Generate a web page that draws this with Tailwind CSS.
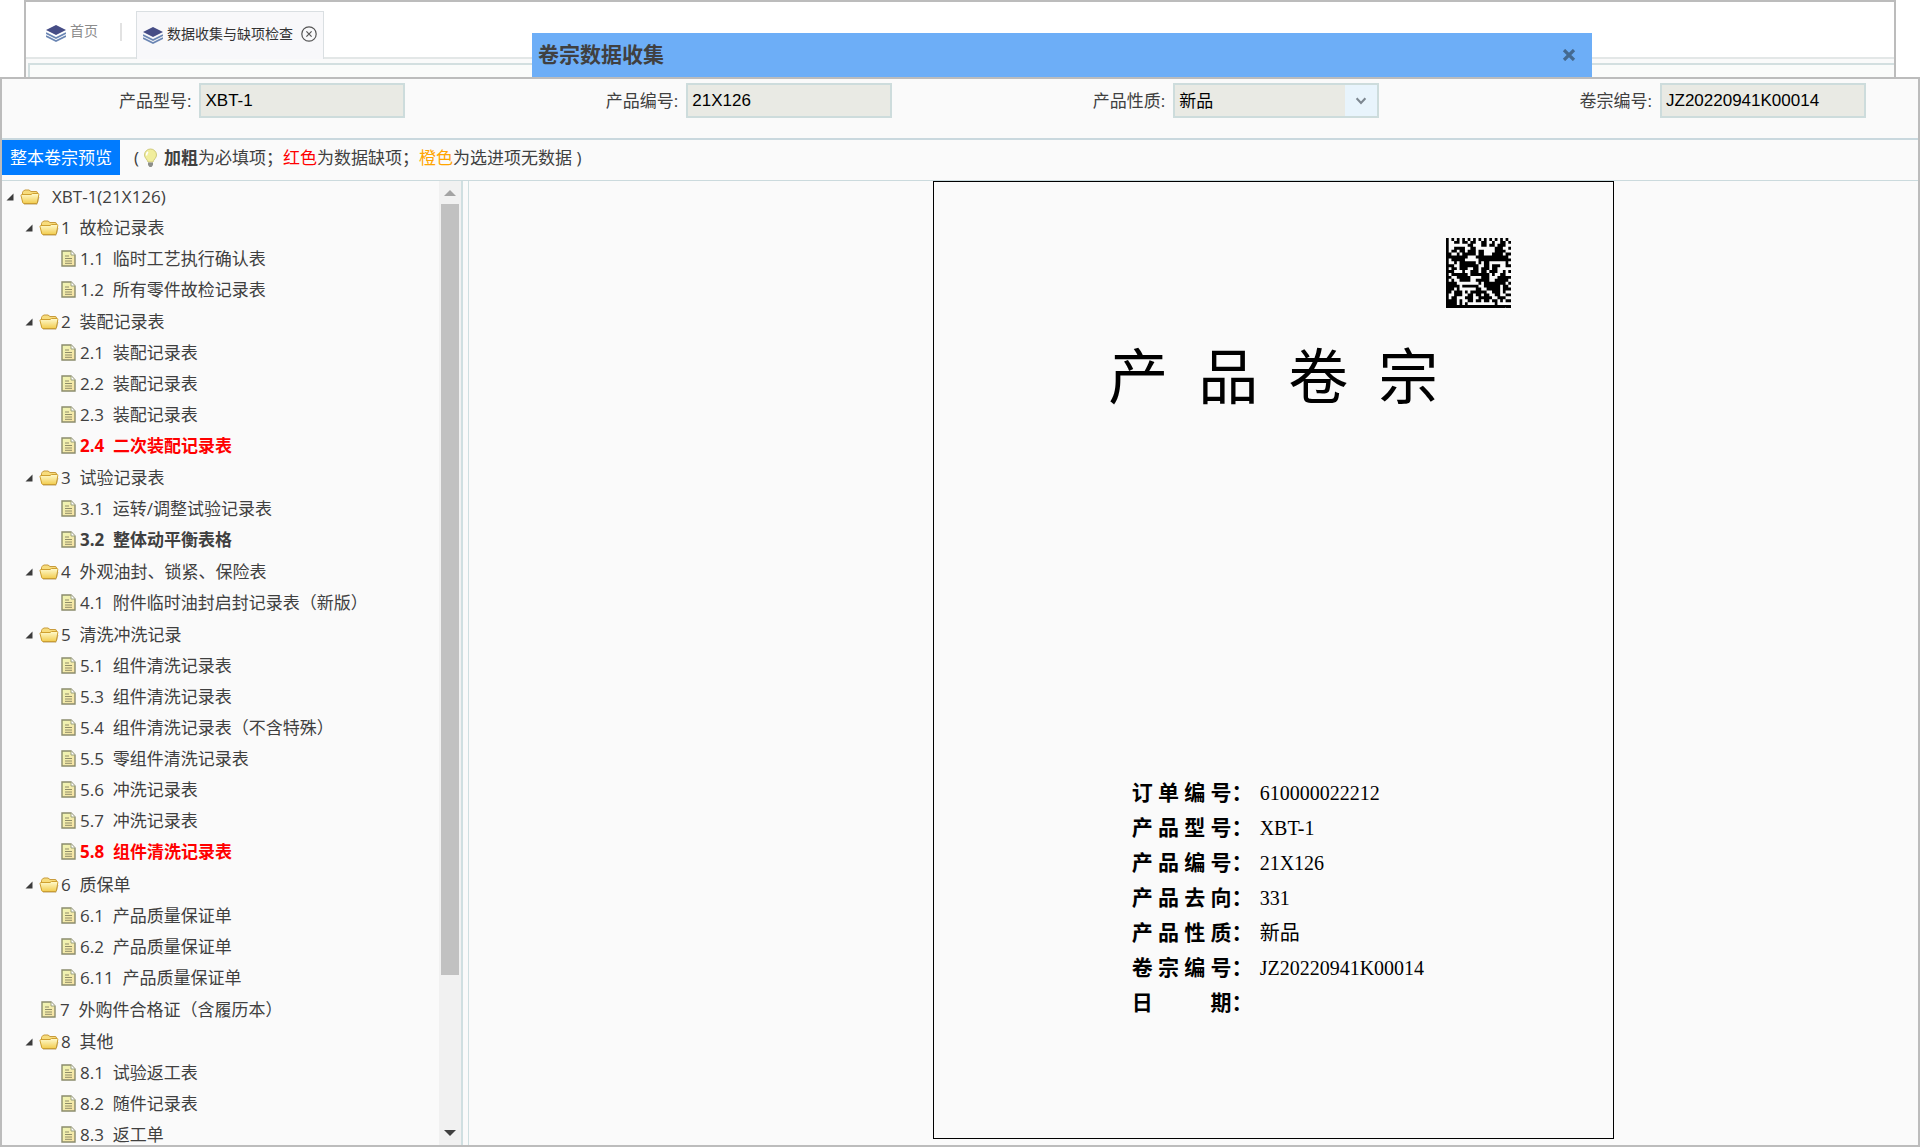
<!DOCTYPE html>
<html lang="zh-CN">
<head>
    <meta charset="UTF-8">
    <meta name="viewport" content="width=device-width, initial-scale=1.0">
    <title>数据收集与缺项检查</title>
    <script src="https://cdn.jsdelivr.net/npm/@tailwindcss/browser@4"></script>
    <style> body { font-family: 'Open Sans', 'Noto Sans CJK SC', sans-serif; } </style>
</head>
<body class="bg-white text-[#404040]">

    <!-- 图标 -->
    <svg class="absolute w-0 h-0">
        <defs>
            <linearGradient id="g-folder" x1="0" y1="0" x2="0" y2="1">
                <stop offset="0" stop-color="#fffbd0"/>
                <stop offset="1" stop-color="#f2cc4e"/>
            </linearGradient>
            <linearGradient id="g-file" x1="0" y1="0" x2="1" y2="1">
                <stop offset="0" stop-color="#eef6b4"/>
                <stop offset="1" stop-color="#f8e2a4"/>
            </linearGradient>
            <symbol id="i-layers" viewBox="0 0 20 17">
                <path d="M10 0L20 5L10 10L0 5Z" fill="#464d86"/>
                <path d="M0 8L10 13L20 8M0 11L10 16L20 11" fill="none" stroke="#6b86b4" stroke-width="1.6"/>
            </symbol>
            <symbol id="i-arrow" viewBox="0 0 8 8">
                <path d="M7.5 .5V7.5H.5Z" fill="#3c3c3c"/>
            </symbol>
            <symbol id="i-folder" viewBox="0 0 20 16">
                <path d="M2.500 13V3.500Q2.500 2.500 3.500 2L5 1H9L11 2.500H16Q17.500 2.500 17.500 4V13Z" fill="#f7dc7c" stroke="#c89b3c"/>
                <path d="M1 6.500Q1 5.500 2 5.500H11L12.500 4.500H18Q19 4.500 18.800 5.500L17.500 13.500Q17.300 14.500 16 14.500H4Q3 14.500 2.700 13.500Z" fill="url(#g-folder)" stroke="#cfa030"/>
                <path d="M4 15.300H17L19 8" fill="none" stroke="#a98a45" stroke-opacity=".5"/>
            </symbol>
            <symbol id="i-file" viewBox="0 0 15 17">
                <path d="M1 1H10L14 5V16H1Z" fill="url(#g-file)" stroke="#8b8c6c" stroke-width="1.400"/>
                <path d="M10 1V5H14" fill="#fff" stroke="#9aa07c"/>
                <path d="M4 6H8M4 8.500H11M4 11H11M4 13.300H11" stroke="#8f8d68"/>
            </symbol>
        </defs>
    </svg>

    <div class="flex flex-col h-screen overflow-hidden relative">

        <!-- 页签栏 -->
        <header class="mx-6 h-[77px] shrink-0 border-2 border-b-0 border-[#bcbcbc] bg-[#fafafa] flex flex-col">
            <nav class="flex h-[57px] shrink-0 items-end bg-white border-b-2 border-[#e3e7e7] text-sm">
                <a href="#" class="flex items-center gap-1 pl-5 pb-1 h-12 text-[#8c8c8c]">
                    <svg class="w-5 h-[17px] mt-1"><use href="#i-layers"/></svg>首页
                </a>
                <span class="w-0.5 h-[18px] bg-[#e2e2e2] ml-[22px] mb-4"></span>
                <div class="flex items-center gap-1 ml-3.5 -mb-0.5 w-[188px] h-12 pl-1.5 pb-1 border border-b-0 border-[#dadfe2] bg-[#f8f8fa] text-[#333]">
                    <svg class="w-5 h-[17px] mt-1 shrink-0"><use href="#i-layers"/></svg>
                    <a href="#" class="whitespace-nowrap">数据收集与缺项检查</a>
                    <button type="button" aria-label="关闭页签" class="ml-1">
                        <svg class="w-4 h-4" viewBox="0 0 16 16" fill="none" stroke="#555" stroke-width="1.2">
                            <circle cx="8" cy="8" r="7.200"/>
                            <path d="M5.400 5.400L10.600 10.600M10.600 5.400L5.400 10.600"/>
                        </svg>
                    </button>
                </div>
            </nav>
            <div class="flex-1 mt-1 ml-0.5 border-t-2 border-l-2 border-[#d3dfe0] bg-[#fafbfa]"></div>
        </header>

        <!-- 弹窗标题 -->
        <div class="absolute top-[33px] left-[532px] right-[328px] h-11 px-1.5 flex items-center justify-between bg-[#6daef7]">
            <h1 class="text-[21px] font-bold">卷宗数据收集</h1>
            <button type="button" aria-label="关闭" class="mr-2.5">
                <svg class="w-3.5 h-3" viewBox="0 0 14 12" stroke="#44698f" stroke-width="3.200"><path d="M2 1L12 11M12 1L2 11"/></svg>
            </button>
        </div>

        <main class="flex flex-1 min-h-0 flex-col border-2 border-[#bcbcbc] bg-[#fafafa] text-[17px]">

            <form class="flex shrink-0 justify-between h-[61px] pt-1 pl-[117px] pr-[52px] border-b-2 border-[#c9d8de]">
                <div class="flex h-[35px] items-center gap-2">
                    <label for="model">产品型号:</label>
                    <input id="model" type="text" value="XBT-1" readonly class="w-[206px] h-[35px] px-1 border-2 border-[#cddcdc] bg-[#e9eae4] text-black font-[Arial,'Liberation_Sans',sans-serif]">
                </div>
                <div class="flex h-[35px] items-center gap-2">
                    <label for="serial">产品编号:</label>
                    <input id="serial" type="text" value="21X126" readonly class="w-[206px] h-[35px] px-1 border-2 border-[#cddcdc] bg-[#e9eae4] text-black font-[Arial,'Liberation_Sans',sans-serif]">
                </div>
                <div class="flex h-[35px] items-center gap-2">
                    <label for="kind">产品性质:</label>
                    <div class="relative">
                        <select id="kind" class="block appearance-none w-[206px] h-[35px] px-1 border-2 border-[#cddcdc] bg-[#e9eae4] text-black">
                            <option>新品</option>
                        </select>
                        <span class="absolute right-0.5 inset-y-0.5 w-8 flex items-center justify-center bg-[#e8f4fc] pointer-events-none">
                            <svg class="w-3 h-2" viewBox="0 0 14 10" fill="none" stroke="#7d8790" stroke-width="2.600"><path d="M1.500 1.500L7 7.500L12.500 1.500"/></svg>
                        </span>
                    </div>
                </div>
                <div class="flex h-[35px] items-center gap-2">
                    <label for="file-no">卷宗编号:</label>
                    <input id="file-no" type="text" value="JZ20220941K00014" readonly class="w-[206px] h-[35px] px-1 border-2 border-[#cddcdc] bg-[#e9eae4] text-black font-[Arial,'Liberation_Sans',sans-serif]">
                </div>
            </form>

            <!-- 工具栏 -->
            <div class="flex shrink-0 h-[41px] items-start border-b border-[#cbdadd]">
                <button type="button" class="h-[35px] px-2 bg-[#007bff] text-white">整本卷宗预览</button>
                <p class="flex items-center h-[35px] ml-3.5">(
                    <svg class="w-[15px] h-5 mx-1" viewBox="0 0 15 20">
                        <path d="M7.500 1A6 6 0 0 0 1.500 7C1.500 10 4.500 11.500 5 14H10C10.500 11.500 13.500 10 13.500 7A6 6 0 0 0 7.500 1Z" fill="#f1ee9c" stroke="#cfca7a"/>
                        <path d="M5 4Q3.500 5 3.500 7.500" stroke="#fff" stroke-width="1.600" fill="none"/>
                        <path d="M5 14.500H10V17L8.500 19H6.500L5 17Z" fill="#8d8f8a"/>
                    </svg>
                    <span class="ml-0.5"><b>加粗</b>为必填项；<span class="text-[#f00]">红色</span>为数据缺项；<span class="text-[#ffa500]">橙色</span>为选进项无数据 )</span>
                </p>
            </div>

            <div class="flex flex-1 min-h-0">

                <!-- 卷宗目录 -->
                <aside class="flex w-[461px] shrink-0 justify-between border-r-2 border-[#cfdfe1]">
                    <ul class="flex-1 leading-[31px] whitespace-nowrap">
                        <li>
                            <div class="flex items-center pl-1"><svg class="w-2 h-2 mr-1.5"><use href="#i-arrow"/></svg><svg class="w-5 h-4 mr-3"><use href="#i-folder"/></svg>XBT-1(21X126)</div>
                            <ul>
                                <li class="pb-px">
                                    <div class="flex items-center pl-[23px]"><svg class="w-2 h-2 mr-1.5"><use href="#i-arrow"/></svg><svg class="w-5 h-4 mr-0.5"><use href="#i-folder"/></svg>1&nbsp; 故检记录表</div>
                                    <ul class="pl-[59px]">
                                        <li class="flex items-center gap-1"><svg class="w-[15px] h-[17px]"><use href="#i-file"/></svg>1.1&nbsp; 临时工艺执行确认表</li>
                                        <li class="flex items-center gap-1"><svg class="w-[15px] h-[17px]"><use href="#i-file"/></svg>1.2&nbsp; 所有零件故检记录表</li>
                                    </ul>
                                </li>
                                <li class="pb-px">
                                    <div class="flex items-center pl-[23px]"><svg class="w-2 h-2 mr-1.5"><use href="#i-arrow"/></svg><svg class="w-5 h-4 mr-0.5"><use href="#i-folder"/></svg>2&nbsp; 装配记录表</div>
                                    <ul class="pl-[59px]">
                                        <li class="flex items-center gap-1"><svg class="w-[15px] h-[17px]"><use href="#i-file"/></svg>2.1&nbsp; 装配记录表</li>
                                        <li class="flex items-center gap-1"><svg class="w-[15px] h-[17px]"><use href="#i-file"/></svg>2.2&nbsp; 装配记录表</li>
                                        <li class="flex items-center gap-1"><svg class="w-[15px] h-[17px]"><use href="#i-file"/></svg>2.3&nbsp; 装配记录表</li>
                                        <li class="flex items-center gap-1 font-bold text-[#f00]"><svg class="w-[15px] h-[17px]"><use href="#i-file"/></svg>2.4&nbsp; 二次装配记录表</li>
                                    </ul>
                                </li>
                                <li class="pb-px">
                                    <div class="flex items-center pl-[23px]"><svg class="w-2 h-2 mr-1.5"><use href="#i-arrow"/></svg><svg class="w-5 h-4 mr-0.5"><use href="#i-folder"/></svg>3&nbsp; 试验记录表</div>
                                    <ul class="pl-[59px]">
                                        <li class="flex items-center gap-1"><svg class="w-[15px] h-[17px]"><use href="#i-file"/></svg>3.1&nbsp; 运转/调整试验记录表</li>
                                        <li class="flex items-center gap-1 font-bold"><svg class="w-[15px] h-[17px]"><use href="#i-file"/></svg>3.2&nbsp; 整体动平衡表格</li>
                                    </ul>
                                </li>
                                <li class="pb-px">
                                    <div class="flex items-center pl-[23px]"><svg class="w-2 h-2 mr-1.5"><use href="#i-arrow"/></svg><svg class="w-5 h-4 mr-0.5"><use href="#i-folder"/></svg>4&nbsp; 外观油封、锁紧、保险表</div>
                                    <ul class="pl-[59px]">
                                        <li class="flex items-center gap-1"><svg class="w-[15px] h-[17px]"><use href="#i-file"/></svg>4.1&nbsp; 附件临时油封启封记录表（新版）</li>
                                    </ul>
                                </li>
                                <li class="pb-0.5">
                                    <div class="flex items-center pl-[23px]"><svg class="w-2 h-2 mr-1.5"><use href="#i-arrow"/></svg><svg class="w-5 h-4 mr-0.5"><use href="#i-folder"/></svg>5&nbsp; 清洗冲洗记录</div>
                                    <ul class="pl-[59px]">
                                        <li class="flex items-center gap-1"><svg class="w-[15px] h-[17px]"><use href="#i-file"/></svg>5.1&nbsp; 组件清洗记录表</li>
                                        <li class="flex items-center gap-1"><svg class="w-[15px] h-[17px]"><use href="#i-file"/></svg>5.3&nbsp; 组件清洗记录表</li>
                                        <li class="flex items-center gap-1"><svg class="w-[15px] h-[17px]"><use href="#i-file"/></svg>5.4&nbsp; 组件清洗记录表（不含特殊）</li>
                                        <li class="flex items-center gap-1"><svg class="w-[15px] h-[17px]"><use href="#i-file"/></svg>5.5&nbsp; 零组件清洗记录表</li>
                                        <li class="flex items-center gap-1"><svg class="w-[15px] h-[17px]"><use href="#i-file"/></svg>5.6&nbsp; 冲洗记录表</li>
                                        <li class="flex items-center gap-1"><svg class="w-[15px] h-[17px]"><use href="#i-file"/></svg>5.7&nbsp; 冲洗记录表</li>
                                        <li class="flex items-center gap-1 font-bold text-[#f00]"><svg class="w-[15px] h-[17px]"><use href="#i-file"/></svg>5.8&nbsp; 组件清洗记录表</li>
                                    </ul>
                                </li>
                                <li class="pb-px">
                                    <div class="flex items-center pl-[23px]"><svg class="w-2 h-2 mr-1.5"><use href="#i-arrow"/></svg><svg class="w-5 h-4 mr-0.5"><use href="#i-folder"/></svg>6&nbsp; 质保单</div>
                                    <ul class="pl-[59px]">
                                        <li class="flex items-center gap-1"><svg class="w-[15px] h-[17px]"><use href="#i-file"/></svg>6.1&nbsp; 产品质量保证单</li>
                                        <li class="flex items-center gap-1"><svg class="w-[15px] h-[17px]"><use href="#i-file"/></svg>6.2&nbsp; 产品质量保证单</li>
                                        <li class="flex items-center gap-1"><svg class="w-[15px] h-[17px]"><use href="#i-file"/></svg>6.11&nbsp; 产品质量保证单</li>
                                    </ul>
                                </li>
                                <li class="flex items-center gap-1 pl-[39px] pb-px"><svg class="w-[15px] h-[17px]"><use href="#i-file"/></svg>7&nbsp; 外购件合格证（含履历本）</li>
                                <li>
                                    <div class="flex items-center pl-[23px]"><svg class="w-2 h-2 mr-1.5"><use href="#i-arrow"/></svg><svg class="w-5 h-4 mr-0.5"><use href="#i-folder"/></svg>8&nbsp; 其他</div>
                                    <ul class="pl-[59px]">
                                        <li class="flex items-center gap-1"><svg class="w-[15px] h-[17px]"><use href="#i-file"/></svg>8.1&nbsp; 试验返工表</li>
                                        <li class="flex items-center gap-1"><svg class="w-[15px] h-[17px]"><use href="#i-file"/></svg>8.2&nbsp; 随件记录表</li>
                                        <li class="flex items-center gap-1"><svg class="w-[15px] h-[17px]"><use href="#i-file"/></svg>8.3&nbsp; 返工单</li>
                                    </ul>
                                </li>
                            </ul>
                        </li>
                    </ul>
                    <!-- 滚动条 -->
                    <div class="flex flex-col items-center w-[22px] px-0.5 bg-[#f1f1f1]">
                        <svg class="w-3 h-[23px] shrink-0" viewBox="0 0 12 23"><path d="M0 15L6 9L12 15Z" fill="#a3a3a3"/></svg>
                        <div class="w-full h-[80%] bg-[#c1c1c1]"></div>
                        <svg class="w-3 h-[23px] mt-auto shrink-0" viewBox="0 0 12 23"><path d="M0 8L6 14L12 8Z" fill="#404040"/></svg>
                    </div>
                </aside>

                <!-- 封面预览 -->
                <section class="flex-1 ml-[5px] border-l border-[#cfdfe1]">
                    <article class="ml-[32%] w-[681px] h-[958px] border border-black text-black font-['Liberation_Serif','Noto_Sans_CJK_SC',serif]">
                        <svg id="matrix" class="ml-auto mr-[102px] mt-14 w-[65px] h-[70px]" viewBox="0 0 24 24" preserveAspectRatio="none"></svg>
                        <h2 class="mt-[26px] text-center text-[60px] leading-[90px]">产&nbsp; 品&nbsp; 卷&nbsp; 宗</h2>
                        <dl class="grid grid-cols-[128px_1fr] mt-[352px] ml-[198px] text-xl leading-[35px] whitespace-pre">
                            <dt class="text-[21px] font-bold">订 单 编 号：</dt><dd>610000022212</dd>
                            <dt class="text-[21px] font-bold">产 品 型 号：</dt><dd>XBT-1</dd>
                            <dt class="text-[21px] font-bold">产 品 编 号：</dt><dd>21X126</dd>
                            <dt class="text-[21px] font-bold">产 品 去 向：</dt><dd>331</dd>
                            <dt class="text-[21px] font-bold">产 品 性 质：</dt><dd>新品</dd>
                            <dt class="text-[21px] font-bold">卷 宗 编 号：</dt><dd>JZ20220941K00014</dd>
                            <dt class="text-[21px] font-bold">日           期：</dt><dd></dd>
                        </dl>
                    </article>
                </section>
            </div>
        </main>
    </div>

    <script>
        // 二维码点阵
        const rows = [
            '#.#.#.#.#.#.#.#.#.#.#.#.',
            '#..##.##.##..##..#..##.#',
            '#.......##...##.##.###..',
            '#..####..##.......###..#',
            '#.##.##.###.##....####..',
            '##..#.#####.##...####.##',
            '########...############.',
            '#.#####.....############',
            '#..#.######.#.##......#.',
            '###..#######..##.###..##',
            '#.##.###..##.###.##.....',
            '###...#..###.##.###..#.#',
            '#.######.#######.#..##..',
            '##..#####....###...#####',
            '#.#..####..#####..#####.',
            '####........#.########.#',
            '#####.######..######.##.',
            '###.#......##..#####.###',
            '##.###.#.######..###.#..',
            '#..###..##.##.##..##..##',
            '#.##...###..#####..###..',
            '####.#..##.##.##.##.#.##',
            '####.#.#..........#.....',
            '########################',
        ];
        let d = '';
        rows.forEach((row, y) => [...row].forEach((c, x) => {
            if (c === '#') d += `M${x} ${y}h1v1h-1z`;
        }));
        document.getElementById('matrix').innerHTML = `<path d="${d}"/>`;
    </script>
</body>
</html>
